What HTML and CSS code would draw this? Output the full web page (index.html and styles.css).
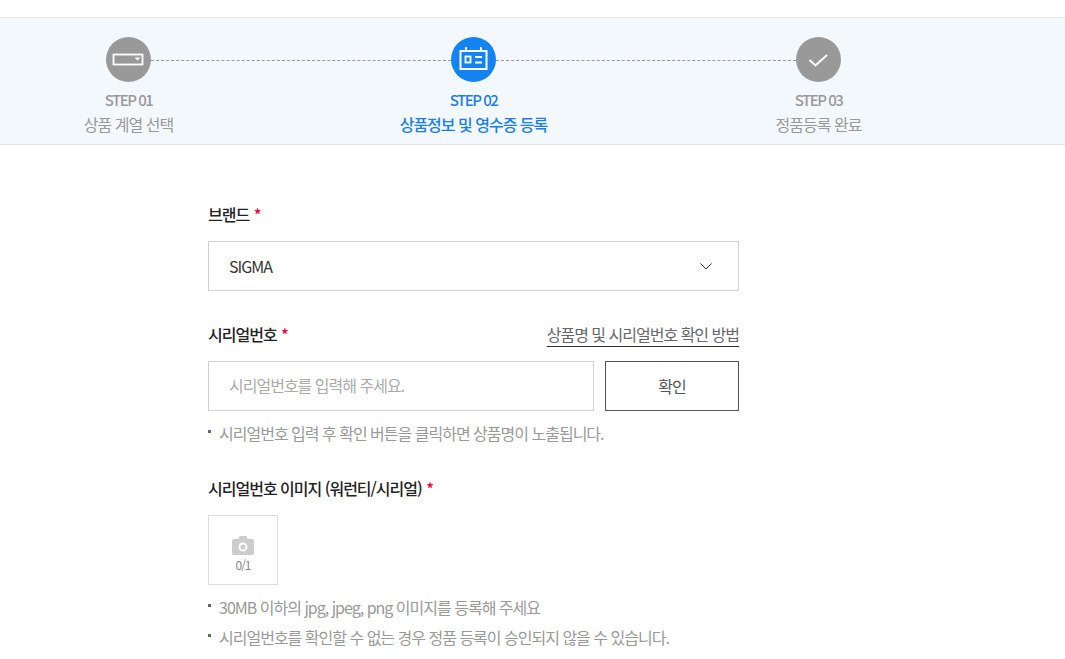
FILE: index.html
```html
<!DOCTYPE html>
<html lang="ko">
<head>
<meta charset="utf-8">
<title>정품등록</title>
<link rel="stylesheet" href="styles.css">
</head>
<body>
<div class="top"></div>
<section class="band">
  <ol class="steps">
    <li class="step line-after">
      <span class="dot"><svg width="45" height="45" viewBox="0 0 45 45"><rect x="7.500" y="17.500" width="29" height="10" fill="none" stroke="#fff" stroke-width="1.800"/><path d="M28.500 20.500h6l-3 3z" fill="#fff"/></svg></span>
      <strong class="num">STEP 01</strong>
      <span class="name">상품 계열 선택</span>
    </li>
    <li class="step active line-after">
      <span class="dot"><svg width="45" height="45" viewBox="0 0 45 45" fill="none" stroke="#fff" stroke-width="2"><rect x="9.500" y="14" width="26" height="18"/><path d="M15 10v4M30 10v4"/><rect x="14.500" y="19.500" width="5" height="6" stroke-width="1.800"/><path d="M24 20h7M24 25.500h7" stroke-width="1.800"/></svg></span>
      <strong class="num">STEP 02</strong>
      <span class="name">상품정보 및 영수증 등록</span>
    </li>
    <li class="step">
      <span class="dot"><svg width="45" height="45" viewBox="0 0 45 45" fill="none" stroke="#fff" stroke-width="2"><path d="M13.500 23l6 5.500 11.500-10.500"/></svg></span>
      <strong class="num">STEP 03</strong>
      <span class="name">정품등록 완료</span>
    </li>
  </ol>
</section>
<main class="form">
  <div class="field">
    <div class="label-row"><h2 class="label">브랜드 <em>*</em></h2></div>
    <div class="select"><span>SIGMA</span><svg width="12" height="7" viewBox="0 0 12 7" fill="none" stroke="#333" stroke-width="1"><path d="M.5.5l5.500 5.500 5.500-5.500"/></svg></div>
  </div>
  <div class="field serial">
    <div class="label-row"><h2 class="label">시리얼번호 <em>*</em></h2><a class="how">상품명 및 시리얼번호 확인 방법</a></div>
    <div class="input-row">
      <div class="input">시리얼번호를 입력해 주세요.</div>
      <button class="confirm">확인</button>
    </div>
    <p class="note first">시리얼번호 입력 후 확인 버튼을 클릭하면 상품명이 노출됩니다.</p>
  </div>
  <div class="field image">
    <div class="label-row"><h2 class="label">시리얼번호 이미지 (워런티/시리얼) <em>*</em></h2></div>
    <div class="upload">
      <svg width="22" height="19" viewBox="0 0 22 19"><path fill-rule="evenodd" fill="#ccc" d="M2 3h4.500l1-3h7l1 3H20a2 2 0 0 1 2 2v12a2 2 0 0 1-2 2H2a2 2 0 0 1-2-2V5a2 2 0 0 1 2-2zm9 3.500a4.500 4.500 0 1 0 0 9 4.500 4.500 0 0 0 0-9zm0 2a2.500 2.500 0 1 1 0 5 2.500 2.500 0 0 1 0-5z"/></svg>
      <span>0/1</span>
    </div>
    <p class="note first">30MB 이하의 jpg, jpeg, png 이미지를 등록해 주세요</p>
    <p class="note">시리얼번호를 확인할 수 없는 경우 정품 등록이 승인되지 않을 수 있습니다.</p>
  </div>
</main>
</body>
</html>
```
FILE: styles.css
```css
* { box-sizing: border-box; }
html, body { margin: 0; padding: 0; }
body {
  height: 659px;
  overflow: hidden;
  background: #fff;
  color: #222;
  font-family: "Noto Sans CJK KR", "Noto Sans", sans-serif;
  font-size: 16px;
  letter-spacing: -1px;
}
.top { height: 17px; }
.band {
  height: 128px;
  background: #f3f8fd;
  border-top: 1px solid #e6e6e6;
  border-bottom: 1px solid #e2e2e2;
}
.steps {
  list-style: none;
  margin: 0;
  padding: 19px 0 0 38.500px;
  display: flex;
  gap: 165px;
}
.step {
  position: relative;
  width: 180px;
  display: flex;
  flex-direction: column;
  align-items: center;
  color: #999;
}
.line-after::after {
  content: "";
  position: absolute;
  top: 23px;
  left: 112.500px;
  width: 300px;
  border-top: 1px dashed #999;
}
.dot {
  width: 45px;
  height: 45px;
  border-radius: 50%;
  background: #999;
  display: block;
}
.dot svg { display: block; }
.num {
  margin-top: 8px;
  font-size: 15px;
  line-height: 20px;
  font-weight: 500;
  letter-spacing: -1.500px;
}
.name {
  margin-top: 4px;
  font-size: 16px;
  line-height: 20px;
}
.active { color: #1a7ee8; }
.active .dot { background: #1283f0; }
.active .name { font-weight: 500; }
.form {
  width: 531px;
  margin-left: 208px;
  padding-top: 59px;
}
.label-row {
  display: flex;
  justify-content: space-between;
  align-items: flex-start;
  height: 22px;
}
.label {
  margin: 0;
  font-size: 16px;
  line-height: 20px;
  font-weight: 500;
  color: #222;
}
.label em {
  margin-left: 1px;
  color: #f0003c;
  font-style: normal;
}
.select {
  margin-top: 15px;
  height: 50px;
  border: 1px solid #d2d2d2;
  padding: 0 26px 0 20px;
  display: flex;
  justify-content: space-between;
  align-items: center;
  color: #333;
}
.serial { margin-top: 33px; }
.how {
  color: #666;
  border-bottom: 1px solid #333;
  line-height: 22px;
  height: 24px;
  margin-top: -1px;
}
.input-row {
  margin-top: 15px;
  display: flex;
  justify-content: space-between;
}
.input {
  width: 386px;
  height: 50px;
  border: 1px solid #d2d2d2;
  padding-left: 20px;
  line-height: 46px;
  color: #aaa;
}
.confirm {
  width: 134px;
  height: 50px;
  border: 1px solid #555;
  background: #fff;
  color: #555;
  font: inherit;
  letter-spacing: inherit;
}
.note {
  position: relative;
  margin: 8px 0 0;
  padding-left: 11px;
  line-height: 22px;
  color: #999;
}
.note::before {
  content: "";
  position: absolute;
  left: 0;
  top: 8px;
  width: 3px;
  height: 3px;
  background: #666;
}
.note.first { margin-top: 11px; }
.image { margin-top: 34px; }
.upload {
  margin-top: 15px;
  width: 70px;
  height: 70px;
  border: 1px solid #ddd;
  display: flex;
  flex-direction: column;
  align-items: center;
  padding-top: 20px;
}
.upload svg { display: block; }
.upload span {
  font-size: 12px;
  line-height: 16px;
  margin-top: 2px;
  color: #888;
}
```
